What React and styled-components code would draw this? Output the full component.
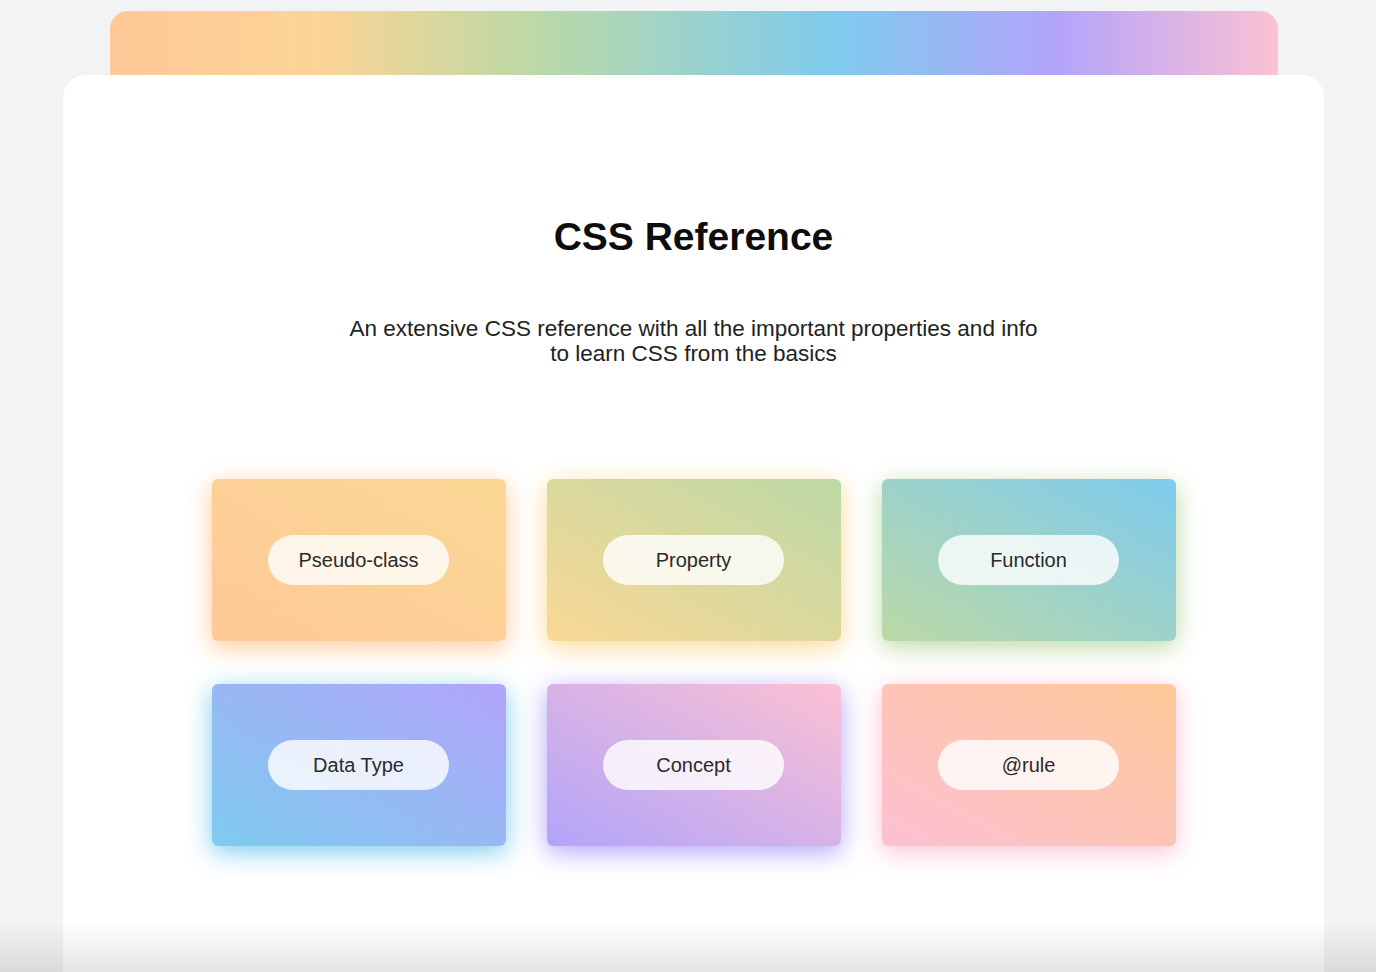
import styled, { createGlobalStyle } from "styled-components";

const GlobalStyle = createGlobalStyle`
  html, body {
    margin: 0;
    padding: 0;
    background: #f2f3f5;
    font-family: "Liberation Sans", Arial, sans-serif;
  }
`;

const colors = {
  orange: "#ffc898",
  yellow: "#fad895",
  green: "#bcd9a6",
  blue: "#7ecbee",
  purple: "#b2a4fa",
  pink: "#fcc1d3",
};

const categories = [
  { label: "Pseudo-class", from: colors.orange, to: colors.yellow },
  { label: "Property", from: colors.yellow, to: colors.green },
  { label: "Function", from: colors.green, to: colors.blue },
  { label: "Data Type", from: colors.blue, to: colors.purple },
  { label: "Concept", from: colors.purple, to: colors.pink },
  { label: "@rule", from: colors.pink, to: colors.orange },
];

const Page = styled.div`
  width: 1261px;
  margin-left: 63px;
  padding-top: 11px;
  height: 961px;
  overflow: hidden;
  display: flex;
  flex-direction: column;
  align-items: center;
`;

const RainbowBar = styled.div`
  width: 1168px;
  height: 64px;
  flex-shrink: 0;
  border-radius: 18px 18px 0 0;
  background: linear-gradient(
    90deg,
    ${colors.orange} 0%,
    #fcd495 18%,
    ${colors.green} 36%,
    ${colors.blue} 62%,
    ${colors.purple} 81%,
    ${colors.pink} 100%
  );
`;

const Sheet = styled.main`
  width: 100%;
  flex: 1;
  background: #fff;
  border-radius: 22px 22px 0 0;
  display: flex;
  flex-direction: column;
  align-items: center;
  padding-top: 139px;
  box-sizing: border-box;
`;

const Title = styled.h1`
  margin: 0;
  font-size: 39px;
  line-height: 46px;
  font-weight: 700;
  color: #0d0d0d;
`;

const Subtitle = styled.p`
  margin: 56px 0 0;
  font-size: 22.5px;
  line-height: 25px;
  color: #222;
  text-align: center;
`;

const Grid = styled.div`
  margin-top: 113px;
  display: grid;
  grid-template-columns: repeat(3, 294px);
  grid-auto-rows: 162px;
  column-gap: 41px;
  row-gap: 43px;
`;

const Card = styled.div`
  border-radius: 6px;
  display: flex;
  align-items: center;
  justify-content: center;
  background: linear-gradient(to top right, ${(p) => p.$from}, ${(p) => p.$to});
  box-shadow: 0 6px 26px ${(p) => p.$from};
`;

const Pill = styled.span`
  width: 181px;
  height: 50px;
  border-radius: 25px;
  background: rgba(255, 255, 255, 0.8);
  display: flex;
  align-items: center;
  justify-content: center;
  font-size: 20px;
  color: #2a2a2a;
`;

const BottomShade = styled.div`
  position: fixed;
  left: 0;
  right: 0;
  bottom: 0;
  height: 50px;
  pointer-events: none;
  background: linear-gradient(to bottom, rgba(0, 0, 0, 0), rgba(0, 0, 0, 0.1));
`;

export default function App() {
  return (
    <>
      <GlobalStyle />
      <Page>
        <RainbowBar />
        <Sheet>
          <Title>CSS Reference</Title>
          <Subtitle>
            An extensive CSS reference with all the important properties and info
            <br />
            to learn CSS from the basics
          </Subtitle>
          <Grid>
            {categories.map((c) => (
              <Card key={c.label} $from={c.from} $to={c.to}>
                <Pill>{c.label}</Pill>
              </Card>
            ))}
          </Grid>
        </Sheet>
      </Page>
      <BottomShade />
    </>
  );
}
